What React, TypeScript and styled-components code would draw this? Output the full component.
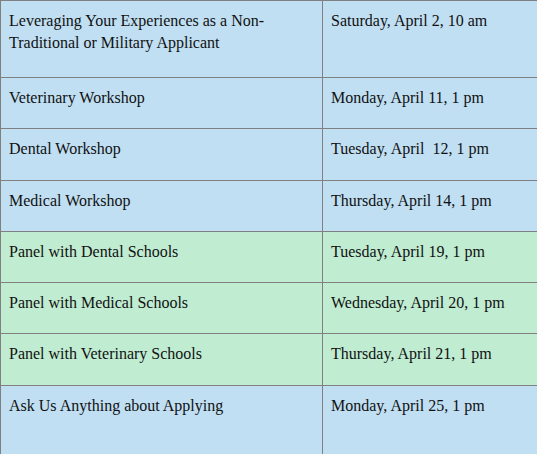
import React from "react";
import styled, { createGlobalStyle } from "styled-components";

const Global = createGlobalStyle`
  html, body { margin: 0; padding: 0; background: #ffffff; }
  body { font-family: "Liberation Serif", "Times New Roman", serif; }
`;

const Table = styled.div`
  width: 537px;
  display: grid;
  grid-template-columns: 322px 215px;
  border-top: 1px solid #808080;
  border-left: 1px solid #808080;
  box-sizing: border-box;
`;

const Cell = styled.div<{ $tone: "blue" | "green"; $tall?: boolean }>`
  box-sizing: border-box;
  background: ${(p) => (p.$tone === "green" ? "#c0ecd1" : "#c0dff3")};
  border-right: 1px solid #808080;
  border-bottom: 1px solid #808080;
  padding: 9px 7px 0 8px;
  height: ${(p) => (p.$tall ? "77px" : "51.3px")};
  font-size: 16px;
  line-height: 21.6px;
  color: #111111;
`;

const rows: { title: string; date: string; tone: "blue" | "green"; tall?: boolean }[] = [
  { title: "Leveraging Your Experiences as a Non-Traditional or Military Applicant", date: "Saturday, April 2, 10 am", tone: "blue", tall: true },
  { title: "Veterinary Workshop", date: "Monday, April 11, 1 pm", tone: "blue" },
  { title: "Dental Workshop", date: "Tuesday, April\u00a0 12, 1 pm", tone: "blue" },
  { title: "Medical Workshop", date: "Thursday, April 14, 1 pm", tone: "blue" },
  { title: "Panel with Dental Schools", date: "Tuesday, April 19, 1 pm", tone: "green" },
  { title: "Panel with Medical Schools", date: "Wednesday, April 20, 1 pm", tone: "green" },
  { title: "Panel with Veterinary Schools", date: "Thursday, April 21, 1 pm", tone: "green" },
  { title: "Ask Us Anything about Applying", date: "Monday, April 25, 1 pm", tone: "blue", tall: true },
];

export default function App() {
  return (
    <>
      <Global />
      <Table>
        {rows.map((r, i) => (
          <React.Fragment key={i}>
            <Cell $tone={r.tone} $tall={r.tall}>
              {i === 0 ? (
                <>
                  Leveraging Your Experiences as a Non-
                  <br />
                  Traditional or Military Applicant
                </>
              ) : (
                r.title
              )}
            </Cell>
            <Cell $tone={r.tone} $tall={r.tall}>
              {r.date}
            </Cell>
          </React.Fragment>
        ))}
      </Table>
    </>
  );
}
